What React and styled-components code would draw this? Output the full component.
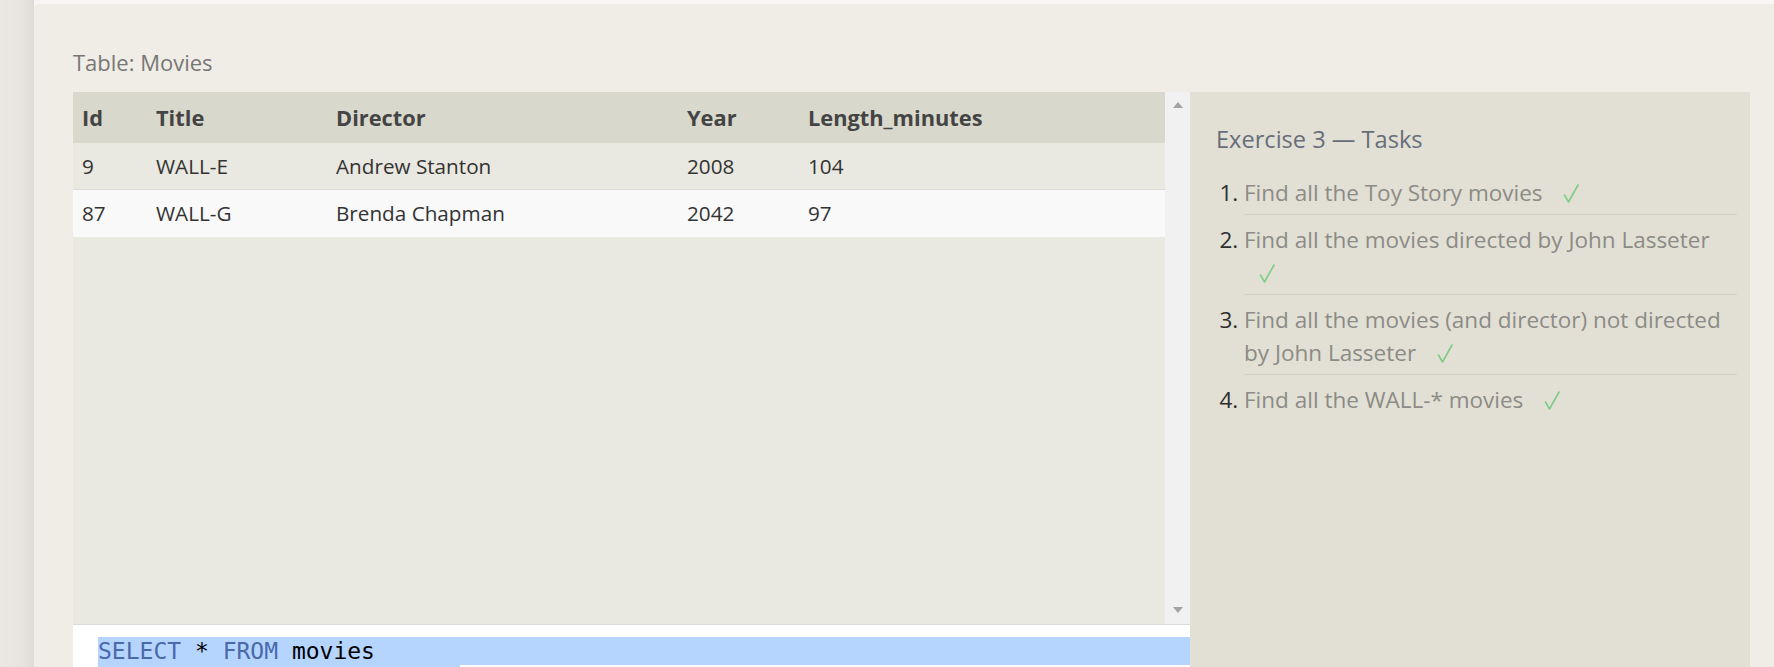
import React from 'react';
import styled, { createGlobalStyle } from 'styled-components';

const GlobalStyle = createGlobalStyle`
  html, body {
    margin: 0;
    padding: 0;
    height: 100%;
    overflow: hidden;
  }
  body {
    background: #f7f6f3;
    font-family: 'Open Sans', 'Liberation Sans', sans-serif;
  }
  * { box-sizing: border-box; }
`;

const Page = styled.div`
  display: flex;
  height: 667px;
  background: #f7f6f3;
`;

const SideStrip = styled.div`
  width: 34px;
  flex-shrink: 0;
  background: linear-gradient(to right, #ebe8e4 0, #e7e3df 24px, #dedad5 34px);
`;

const Main = styled.main`
  flex: 1;
  min-width: 0;
  margin-top: 4px;
  padding: 44px 24px 0 39px;
  background: #f0ede6;
  border-top-left-radius: 5px;
  display: flex;
  flex-direction: column;
`;

const Caption = styled.div`
  font-size: 22px;
  line-height: 28px;
  color: #777;
  margin-bottom: 16px;
`;

const Workspace = styled.div`
  flex: 1;
  display: flex;
  min-height: 0;
`;

const LeftColumn = styled.div`
  width: 1117px;
  flex-shrink: 0;
  display: flex;
  flex-direction: column;
`;

const TableViewport = styled.div`
  height: 533px;
  flex-shrink: 0;
  display: flex;
  border-bottom: 1px solid #dedcd6;
`;

const TableArea = styled.div`
  flex: 1;
  background: #e9e8e1;
`;

const Table = styled.table`
  width: 100%;
  border-collapse: collapse;
  table-layout: fixed;
  font-size: 20.7px;
  color: #333;
`;

const HeadCell = styled.th`
  height: 51px;
  padding: 0 9px;
  text-align: left;
  font-size: 21.8px;
  font-weight: 700;
  color: #444;
  background: #d9d8cc;
`;

const Row = styled.tr`
  background: ${(p) => (p.$alt ? '#f9f9f9' : '#e9e8e1')};
  border-bottom: ${(p) => (p.$last ? 'none' : '1px solid #dcdbd5')};
`;

const Cell = styled.td`
  height: ${(p) => (p.$last ? '48px' : '46px')};
  padding: 0 9px;
  white-space: nowrap;
`;

const ScrollTrack = styled.div`
  width: 25px;
  flex-shrink: 0;
  background: #f1f1f1;
  display: flex;
  flex-direction: column;
  justify-content: space-between;
  align-items: center;
  padding: 10px 0 11px;
`;

const Arrow = styled.span`
  width: 0;
  height: 0;
  border-left: 5.5px solid transparent;
  border-right: 5.5px solid transparent;
  ${(p) =>
    p.$down ? 'border-top: 6px solid #a3a3a3;' : 'border-bottom: 6px solid #a3a3a3;'}
`;

const Editor = styled.div`
  flex: 1;
  background: #fff;
  padding: 12px 0 0 25px;
  font-family: 'DejaVu Sans Mono', 'Liberation Mono', monospace;
  font-size: 23px;
  line-height: 28px;
  color: #000;
`;

const CodeLine = styled.div`
  background: #b5d5ff;
  white-space: pre;
  height: 28px;
  width: ${(p) => (p.$partial ? '362px' : 'auto')};
`;

const Keyword = styled.span`
  color: #4a69a9;
`;

const TasksPanel = styled.aside`
  width: 560px;
  flex-shrink: 0;
  background: #e2e0d5;
  padding: 32px 13px 0 26px;
`;

const TasksTitle = styled.h3`
  margin: 0 0 14px;
  font-size: 23.6px;
  line-height: 30px;
  font-weight: 400;
  color: #676e7a;
`;

const TaskList = styled.ol`
  margin: 0;
  padding-left: 28px;
  font-size: 22.5px;
  line-height: 33px;
  color: #2f2f2f;
`;

const TaskItem = styled.li`
  padding: 8px 0 5px;
  border-bottom: 1px solid #d3d1c6;

  &:last-child {
    border-bottom: none;
  }
`;

const TaskText = styled.span`
  color: #8c8b86;
`;

const CheckMark = styled.svg`
  display: inline-block;
  margin-left: 15px;
  vertical-align: -2px;
`;

const Check = () => (
  <CheckMark width="16" height="19" viewBox="0 0 16 19">
    <polyline
      points="1.5,11 5.5,18 15,1"
      fill="none"
      stroke="#7fcb88"
      strokeWidth="1.6"
      strokeLinecap="round"
      strokeLinejoin="round"
    />
  </CheckMark>
);

const columns = [
  { key: 'id', label: 'Id', width: 74 },
  { key: 'title', label: 'Title', width: 180 },
  { key: 'director', label: 'Director', width: 351 },
  { key: 'year', label: 'Year', width: 121 },
  { key: 'length', label: 'Length_minutes' },
];

const movies = [
  { id: 9, title: 'WALL-E', director: 'Andrew Stanton', year: 2008, length: 104 },
  { id: 87, title: 'WALL-G', director: 'Brenda Chapman', year: 2042, length: 97 },
];

const tasks = [
  'Find all the Toy Story movies',
  'Find all the movies directed by John Lasseter',
  'Find all the movies (and director) not directed by John Lasseter',
  'Find all the WALL-* movies',
];

const App = () => {
  return (
    <>
      <GlobalStyle />
      <Page>
        <SideStrip />
        <Main>
          <Caption>Table: Movies</Caption>
          <Workspace>
            <LeftColumn>
              <TableViewport>
                <TableArea>
                  <Table>
                    <colgroup>
                      {columns.map((col) => (
                        <col key={col.key} style={col.width ? { width: col.width } : undefined} />
                      ))}
                    </colgroup>
                    <thead>
                      <tr>
                        {columns.map((col) => (
                          <HeadCell key={col.key}>{col.label}</HeadCell>
                        ))}
                      </tr>
                    </thead>
                    <tbody>
                      {movies.map((movie, i) => (
                        <Row key={movie.id} $alt={i % 2 === 1} $last={i === movies.length - 1}>
                          {columns.map((col) => (
                            <Cell key={col.key} $last={i === movies.length - 1}>
                              {movie[col.key]}
                            </Cell>
                          ))}
                        </Row>
                      ))}
                    </tbody>
                  </Table>
                </TableArea>
                <ScrollTrack>
                  <Arrow />
                  <Arrow $down />
                </ScrollTrack>
              </TableViewport>
              <Editor>
                <CodeLine>
                  <Keyword>SELECT</Keyword> * <Keyword>FROM</Keyword> movies
                </CodeLine>
                <CodeLine $partial />
              </Editor>
            </LeftColumn>
            <TasksPanel>
              <TasksTitle>Exercise 3 — Tasks</TasksTitle>
              <TaskList>
                {tasks.map((task) => (
                  <TaskItem key={task}>
                    <TaskText>{task}</TaskText> <Check />
                  </TaskItem>
                ))}
              </TaskList>
            </TasksPanel>
          </Workspace>
        </Main>
      </Page>
    </>
  );
};

export default App;
